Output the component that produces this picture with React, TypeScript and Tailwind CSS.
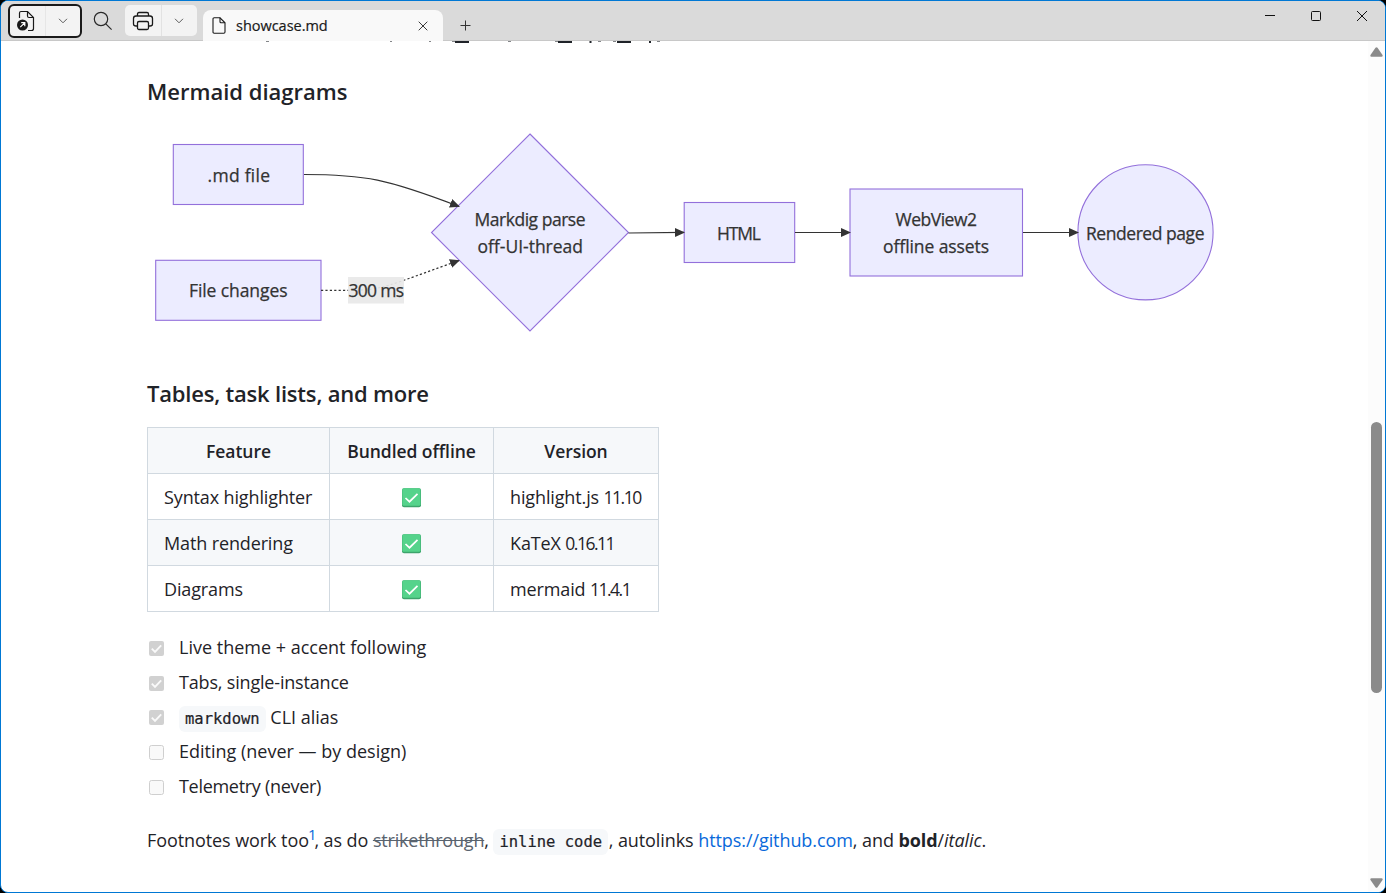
import React from "react";

const check = "M2.8 7.6 6 10.8 12.2 4.4";

function Chevron() {
  return (
    <svg width="10" height="6" viewBox="0 0 10 6" fill="none" stroke="#5c5c5c" strokeWidth="1">
      <path d="M1 .8 5 4.8 9 .8" />
    </svg>
  );
}

function TitleBar() {
  return (
    <header className="flex h-[40px] shrink-0 border-b border-[#c8c8c8] bg-[#dadada]">
      <div className="mt-[3px] ml-[7px] flex h-[34px] w-[74px] rounded-[6px] border-2 border-[#1a1a1a] bg-[#f3f3f3]">
        <div className="flex w-[36px] items-center border-r border-[#e6e6e6] pl-[6px]">
          <svg width="20" height="22" viewBox="0 0 20 22" fill="none">
            <path d="M3.5 8V3Q3.5 1.5 5 1.5H11.5L17.5 7.5V18.5Q17.5 20.5 15.5 20.5H12" stroke="#1a1a1a" strokeWidth="1.2" />
            <path d="M11.5 1.5V6Q11.5 7.5 13 7.5H17.5" stroke="#1a1a1a" strokeWidth="1.2" />
            <circle cx="6.5" cy="15" r="5.5" fill="#1a1a1a" />
            <path d="M4.3 17.2 8.6 12.9M5.2 12.7H8.8V16.3" stroke="#fff" strokeWidth="1.2" />
          </svg>
        </div>
        <div className="flex flex-1 items-center justify-center"><Chevron /></div>
      </div>
      <div className="flex w-[43px] items-center justify-center pr-[1px]">
        <svg width="20" height="20" viewBox="0 0 20 20" fill="none" stroke="#2a2a2a" strokeWidth="1.2">
          <circle cx="8" cy="8" r="6.7" />
          <path d="M12.8 12.8 18.6 18.6" />
        </svg>
      </div>
      <div className="mt-[4px] flex h-[31px] w-[72px] rounded-[5px] bg-[#f3f3f3]">
        <div className="flex w-[37px] items-center justify-center border-r border-[#e2e2e2]">
          <svg width="22" height="20" viewBox="0 0 22 20" fill="none" stroke="#1a1a1a" strokeWidth="1.3">
            <path d="M5.5 5V3Q5.5 1.5 7 1.5H15Q16.5 1.5 16.5 3V5" />
            <path d="M5.5 15H4Q1.5 15 1.5 13V7.5Q1.5 5 4 5H18Q20.5 5 20.5 7.5V13Q20.5 15 18 15H16.5" />
            <rect x="5.5" y="10.5" width="11" height="8" rx="1.5" />
          </svg>
        </div>
        <div className="flex flex-1 items-center justify-center pr-[1px]"><Chevron /></div>
      </div>
      <div className="mt-[9px] ml-[6px] flex h-[31px] w-[240px] items-center rounded-t-[8px] bg-[#f9f9f9] pl-[9px]">
        <svg width="14" height="17" viewBox="0 0 14 17" fill="none" stroke="#1a1a1a" strokeWidth="1.1">
          <path d="M1 2Q1 .8 2.2.8H8L13 5.8V15Q13 16.2 11.8 16.2H2.2Q1 16.2 1 15Z" />
          <path d="M8 .8V4.8Q8 5.8 9 5.8H13" />
        </svg>
        <span className="ml-[10px] w-[182px] text-[14.5px] font-medium tracking-[-0.02px] text-[#1a1a1a] [-webkit-text-stroke:0.2px]">showcase.md</span>
        <svg width="10" height="10" viewBox="0 0 10 10" stroke="#3a3a3a" strokeWidth="1">
          <path d="M.7.7 9.3 9.3M9.3.7.7 9.3" />
        </svg>
      </div>
      <div className="flex w-[44px] items-center justify-center pt-[9px]">
        <svg width="11" height="11" viewBox="0 0 11 11" stroke="#333" strokeWidth="1">
          <path d="M5.5.5V10.5M.5 5.5H10.5" />
        </svg>
      </div>
      <div className="ml-auto flex w-[138px] pb-[9px]">
        <div className="flex flex-1 items-center justify-center">
          <svg width="10" height="10" viewBox="0 0 10 10" stroke="#111"><path d="M0 4.5H10" /></svg>
        </div>
        <div className="flex flex-1 items-center justify-center">
          <svg width="10" height="10" viewBox="0 0 10 10" fill="none" stroke="#111"><rect x=".5" y=".5" width="9" height="9" rx="1" /></svg>
        </div>
        <div className="flex flex-1 items-center justify-center">
          <svg width="10" height="10" viewBox="0 0 10 10" stroke="#111"><path d="M0 0 10 10M10 0 0 10" /></svg>
        </div>
      </div>
    </header>
  );
}

function ScrolledLine() {
  return (
    <svg className="block" width="520" height="4" viewBox="147 41 520 4" fill="#1f2328">
      <path d="M455 41h14v2h-14zM558 41h14v2h-14zM617 41h14v2h-14zM589.500 41h2v2h-2zM649 41h2v2h-2z" />
      <path d="M266 41h3v1h-3zM390 41h2v1h-2zM429 41h2v1h-2zM452 41h3v1h-3zM508 41h3v1h-3zM555 41h3v1h-3zM598 41h3v1h-3zM613 41h3v1h-3zM657 41h3v1h-3z" opacity=".55" />
    </svg>
  );
}

function Label({ x, y, w, children }: { x: number; y: number; w: number; children: string }) {
  return (
    <text x={x} y={y} textLength={w} fontSize="17.5" fill="#333" stroke="#333" strokeWidth=".25">
      {children}
    </text>
  );
}

function Diagram() {
  return (
    <svg className="block" width="1080" height="220" viewBox="147 125 1080 220">
      <defs>
        <marker id="arrow" viewBox="0 0 10 10" refX="9" refY="5" markerWidth="10" markerHeight="9" markerUnits="userSpaceOnUse" orient="auto" preserveAspectRatio="none">
          <path d="M0 0 10 5 0 10z" fill="#333" />
        </marker>
      </defs>
      <g fill="#ececff" stroke="#9370db" strokeWidth="1.1">
        <rect x="173.300" y="144.500" width="130" height="60" />
        <rect x="155.700" y="260.300" width="165.300" height="60" />
        <path d="M530 134 628.500 232.500 530 331 431.500 232.500Z" />
        <rect x="684.200" y="202.500" width="110.500" height="60" />
        <rect x="850" y="189" width="172.500" height="87" />
        <circle cx="1145.500" cy="232.300" r="67.600" />
      </g>
      <g fill="none" stroke="#333" strokeWidth="1.15">
        <path d="M304 174.500C365 174.500 387 179 459 206.500" markerEnd="url(#arrow)" />
        <path d="M321 290.300H349C383 290.300 387 286 459 260.500" strokeDasharray="2.200 2.200" markerEnd="url(#arrow)" />
        <path d="M628.500 233 684 232.400" markerEnd="url(#arrow)" />
        <path d="M795 232.500H850" markerEnd="url(#arrow)" />
        <path d="M1023 232.500H1078" markerEnd="url(#arrow)" />
      </g>
      <rect x="348" y="277" width="56" height="26.500" fill="#e8e8e8" fillOpacity=".92" />
      <Label x={207.500} y={181.500} w={62.500}>.md file</Label>
      <Label x={189} y={296.500} w={98.500}>File changes</Label>
      <Label x={348.500} y={296.500} w={55.500}>300 ms</Label>
      <Label x={474.500} y={225.500} w={111}>Markdig parse</Label>
      <Label x={477.500} y={252.500} w={105.500}>off-UI-thread</Label>
      <Label x={717} y={239.500} w={44}>HTML</Label>
      <Label x={895.500} y={225.500} w={81.500}>WebView2</Label>
      <Label x={883} y={252.500} w={106}>offline assets</Label>
      <Label x={1086} y={239.500} w={118.500}>Rendered page</Label>
    </svg>
  );
}

function Done() {
  return (
    <svg className="mx-auto mt-[2px] block" width="20" height="20" viewBox="0 0 20 20" fill="none">
      <rect x="0" y=".3" width="19" height="19" rx="2" fill="#3da46c" />
      <rect x=".3" y=".3" width="18.200" height="17.500" rx="1.500" fill="#55d38b" />
      <path d="M3.500 10 7.500 13.700 15.500 5.800" stroke="#fff" strokeWidth="1.700" />
    </svg>
  );
}

const rows = [
  ["Syntax highlighter", "highlight.js", "11.10"],
  ["Math rendering", "KaTeX", "0.16.11"],
  ["Diagrams", "mermaid", "11.4.1"],
];

function FeatureTable() {
  const cell = "border border-[#d1d9e0] px-[16px] py-0";
  const head = "border border-[#d1d9e0] px-[12px] py-0 font-semibold text-[17.5px] tracking-[-0.05px]";
  return (
    <table className="h-[185px] w-[512px] table-fixed border-collapse text-[18px] leading-[28px] tracking-[-0.13px] whitespace-nowrap">
      <colgroup>
        <col className="w-[182px]" />
        <col className="w-[164px]" />
        <col className="w-[165px]" />
      </colgroup>
      <thead>
        <tr className="h-[46px] bg-[#f6f8fa]">
          <th className={head}>Feature</th>
          <th className={head}>Bundled offline</th>
          <th className={head}>Version</th>
        </tr>
      </thead>
      <tbody>
        {rows.map(([feature, name, version], i) => (
          <tr key={feature} className={i === 1 ? "h-[46px] bg-[#f6f8fa]" : "h-[46px]"}>
            <td className={cell}>{feature}</td>
            <td className={cell}><Done /></td>
            <td className={cell}>
              {name} <span className="text-[17.5px] tracking-[-1.5px]">{version}</span>
            </td>
          </tr>
        ))}
      </tbody>
    </table>
  );
}

function Code({ children }: { children: string }) {
  return (
    <code className="rounded-[6px] bg-[#f6f8fa] px-[6px] py-[4px] font-['DejaVu_Sans_Mono',monospace] text-[15.5px] leading-[18px] tracking-normal [-webkit-text-stroke:0.2px]">
      {children}
    </code>
  );
}

function Task({ done, children }: { done?: boolean; children: React.ReactNode }) {
  return (
    <li className="flex h-[34.700px] items-center">
      <svg className="mt-[2px] mr-[15px] ml-[2px]" width="15" height="15" viewBox="0 0 15 15" fill="none">
        {done ? (
          <>
            <rect width="15" height="15" rx="2" fill="#d1d1d1" />
            <path d={check} stroke="#fafafa" strokeWidth="1.900" />
          </>
        ) : (
          <rect x=".5" y=".5" width="14" height="14" rx="2" fill="#f9f9f9" stroke="#cfcfcf" />
        )}
      </svg>
      <span>{children}</span>
    </li>
  );
}

export default function App() {
  return (
    <div className="h-[893px] w-[1386px] overflow-hidden bg-black font-['Open_Sans','Noto_Sans',sans-serif] text-[#1f2328]">
      <div className="flex h-full flex-col overflow-hidden rounded-[8px] border border-[#0078d4] bg-white">
        <TitleBar />
        <div className="flex min-h-0 flex-1">
          <main className="flex flex-1 flex-col overflow-hidden pl-[146px]">
            <ScrolledLine />
            <h3 className="mt-[31px] h-[30px] text-[22px] leading-[30px] font-semibold">Mermaid diagrams</h3>
            <div className="mt-[19px]"><Diagram /></div>
            <h3 className="mt-[33px] mb-[19px] h-[30px] text-[22px] leading-[30px] font-semibold tracking-[-0.2px]">Tables, task lists, and more</h3>
            <FeatureTable />
            <ul className="mt-[18px] text-[18px] leading-[28px]">
              <Task done>Live theme + accent following</Task>
              <Task done><span className="tracking-[-0.18px]">Tabs, single-instance</span></Task>
              <Task done><Code>markdown</Code> CLI alias</Task>
              <Task>Editing (never — by design)</Task>
              <Task><span className="tracking-[-0.3px]">Telemetry (never)</span></Task>
            </ul>
            <p className="mt-[23px] text-[18px] leading-[28px] tracking-[-0.08px] whitespace-nowrap">
              Footnotes work too<sup className="top-[-7px] -mr-[2px] -ml-[1px] text-[15px] text-[#0969da]">1</sup>, as do{" "}
              <del className="tracking-[-0.2px] text-[#59636e]">strikethrough</del>, <Code>inline code</Code>{" "}
              <span className="-ml-[4px]">, autolinks </span>
              <a className="text-[#0969da]">https://github.com</a>, and <strong className="font-bold">bold</strong>/<em>italic</em>.
            </p>
          </main>
          <div className="flex w-[17px] flex-col items-center bg-[#fcfcfc]">
            <svg className="mt-[6px]" width="13" height="10" viewBox="0 0 13 10" fill="#8b8b8b"><path d="M5.500.8Q6.500-.4 7.500.8L12.500 8Q13.200 9.700 11.500 9.700H1.500Q-.2 9.700.5 8Z" /></svg>
            <div className="mt-[365px] h-[271px] w-[11px] rounded-full bg-[#8b8b8b]" />
            <svg className="mt-auto mb-[4px]" width="13" height="10" viewBox="0 0 13 10" fill="#8b8b8b"><path d="M5.500 9.200Q6.500 10.400 7.500 9.200L12.500 2Q13.200.3 11.500.3H1.500Q-.2.3.5 2Z" /></svg>
          </div>
        </div>
      </div>
    </div>
  );
}
